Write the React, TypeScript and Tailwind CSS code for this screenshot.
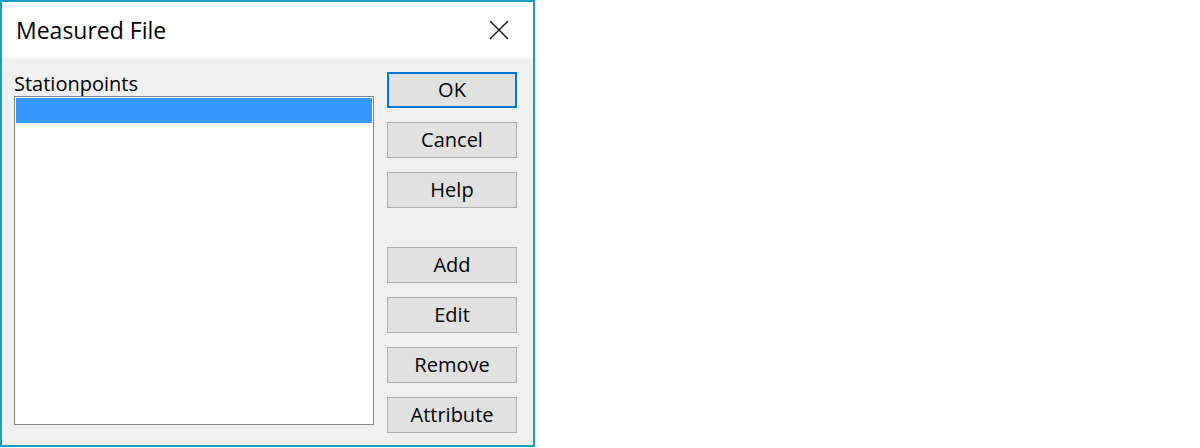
import React from "react";

const font = { fontFamily: '"Open Sans", "Noto Sans", sans-serif' };

type Btn = { label: string; primary?: boolean; gapBefore?: boolean };

const buttons: Btn[] = [
  { label: "OK", primary: true },
  { label: "Cancel" },
  { label: "Help" },
  { label: "Add", gapBefore: true },
  { label: "Edit" },
  { label: "Remove" },
  { label: "Attribute" },
];

function CloseIcon() {
  return (
    <svg width="20" height="20" viewBox="0 0 20 20" fill="none" stroke="#111" strokeWidth="1.4">
      <path d="M1 1 L19 19 M19 1 L1 19" />
    </svg>
  );
}

export default function App() {
  return (
    <div className="w-[1200px] h-[448px] bg-white" style={font}>
      <div className="w-[535px] h-[447px] border-2 border-[#18a0c4] flex flex-col bg-[#f0f0f0]">
        {/* title bar */}
        <div className="h-[56px] bg-white flex items-center justify-between pl-[14px] pr-[24px] shrink-0">
          <span className="text-[23px] text-black leading-none">Measured File</span>
          <CloseIcon />
        </div>

        {/* body */}
        <div className="flex flex-1 pl-[12px] pt-[14px]">
          <div className="flex flex-col">
            <div className="text-[20px] leading-[24px] text-black">Stationpoints</div>
            <div className="w-[360px] h-[329px] border border-[#828790] bg-white p-px">
              <div className="h-[25px] bg-[#3399ff]" />
            </div>
          </div>

          <div className="flex flex-col gap-[14px] ml-[13px]">
            {buttons.map((b) => (
              <button
                key={b.label}
                className={
                  "w-[130px] h-[36px] bg-[#e1e1e1] text-[20px] text-black flex items-center justify-center " +
                  (b.primary ? "border-2 border-[#0078d7] " : "border border-[#adadad] ") +
                  (b.gapBefore ? "mt-[25px]" : "")
                }
              >
                {b.label}
              </button>
            ))}
          </div>
        </div>
      </div>
    </div>
  );
}
